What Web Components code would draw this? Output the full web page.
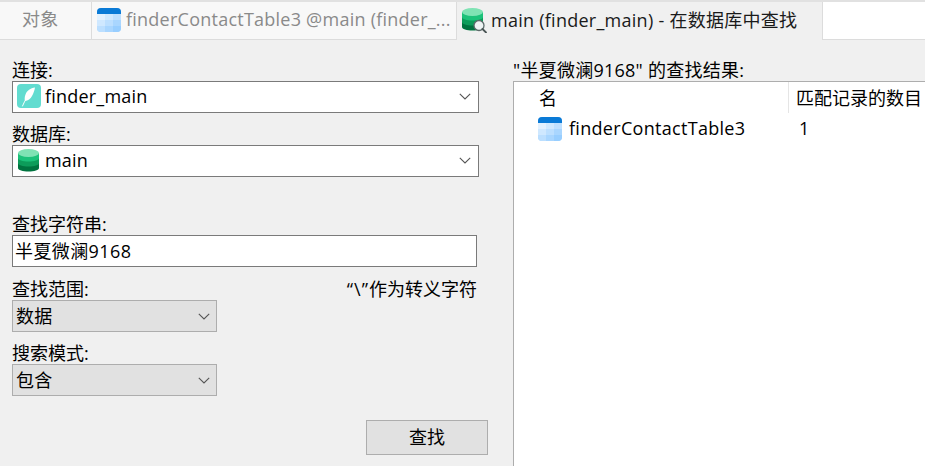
<!DOCTYPE html>
<html lang="zh-CN"><head><meta charset="utf-8"><title>在数据库中查找</title>
<style>
html,body{margin:0;padding:0}
body{width:925px;height:466px;overflow:hidden;background:#f0f0f0;color:#000;font:18px/21px "Open Sans","Noto Sans CJK SC",sans-serif}
</style></head><body>
<template id="ic-table"><svg width="24" height="24" viewBox="0 0 24 24" style="display:block;flex:none"><defs><clipPath id="c"><rect width="24" height="24" rx="4"/></clipPath></defs><g clip-path="url(#c)"><rect width="24" height="24" fill="#a6d5ff"/><rect width="24" height="6" fill="#0a7ad6"/><rect y="6" width="8" height="6" fill="#e2f1ff"/><rect x="8" y="6" width="8" height="6" fill="#d0e9ff"/><rect x="16" y="6" width="8" height="6" fill="#bfe0ff"/><rect y="12" width="8" height="6" fill="#cfe8ff"/><rect x="8" y="12" width="8" height="6" fill="#bcdfff"/><rect x="16" y="12" width="8" height="6" fill="#a9d6ff"/><rect y="18" width="8" height="6" fill="#bcdfff"/><rect x="8" y="18" width="8" height="6" fill="#a9d6ff"/><rect x="16" y="18" width="8" height="6" fill="#98ceff"/></g></svg></template>
<template id="ic-db"><svg width="24" height="24" viewBox="0 0 24 24" style="display:block;flex:none"><path d="M1 5v15c0 2 4.700 3.500 10.500 3.500S22 22 22 20V5z" fill="#00733f"/><path d="M1 5v10c0 2 4.700 3.500 10.500 3.500S22 17 22 15V5z" fill="#0d9c5a"/><path d="M1 5v5c0 2 4.700 3.500 10.500 3.500S22 12 22 10V5z" fill="#1cc27a"/><ellipse cx="11.500" cy="5" rx="10.500" ry="4" fill="#7fe3b4"/></svg></template>
<template id="ic-db-find"><svg width="26" height="26" viewBox="0 0 26 26" style="display:block;flex:none"><path d="M0 5v15c0 2 4.700 3.500 10.500 3.500S21 22 21 20V5z" fill="#00733f"/><path d="M0 5v10c0 2 4.700 3.500 10.500 3.500S21 17 21 15V5z" fill="#0d9c5a"/><path d="M0 5v5c0 2 4.700 3.500 10.500 3.500S21 12 21 10V5z" fill="#1cc27a"/><ellipse cx="10.500" cy="5" rx="10.500" ry="4" fill="#7fe3b4"/><circle cx="17" cy="18.500" r="5" fill="#eef3f3" stroke="#5c6a6a" stroke-width="1.300"/><path d="M20.500 22l3.500 3.500" stroke="#4a5555" stroke-width="1.800" stroke-linecap="round"/></svg></template>
<template id="ic-feather"><svg width="24" height="24" viewBox="0 0 24 24" style="display:block;flex:none"><rect width="24" height="24" rx="4" fill="#62dcd0"/><path d="M18 3.500c-4.500.5-8 3-9.500 7C7.500 13 7.500 15.500 8 17c3-.5 5.500-2 7-5 1.500-2.800 2.500-5.500 3-8.500z" fill="#fff"/><path d="M14.500 8C11 11.500 8 16 5.500 22" fill="none" stroke="#fff" stroke-width="1" stroke-linecap="round"/></svg></template>

<script>
function icon(n){return document.getElementById('ic-'+n).content.cloneNode(true)}
const chev='<svg width="12" height="7" viewBox="0 0 12 7" style="display:block;flex:none"><path d="M.8.8 6 6 11.200.8" fill="none" stroke="#555" stroke-width="1.100"/></svg>';
function def(name,css,html,withIcon){customElements.define(name,class extends HTMLElement{
  constructor(){super();const r=this.attachShadow({mode:'open'});r.innerHTML='<style>'+css+'</style>'+html}
  connectedCallback(){if(withIcon){const n=this.getAttribute('icon'),s=this.shadowRoot.getElementById('i');if(n&&!s.firstChild)s.append(icon(n))}}
})}

def('x-tab',`:host{display:flex;align-items:center;box-sizing:border-box;height:37px;gap:5px;padding-left:5px;padding-bottom:2px;background:#f8f8f8;color:#8a8a8a;border-right:1px solid #dcdcdc;overflow:hidden;white-space:nowrap;letter-spacing:.24px}
:host([active]){background:#f0f0f0;color:#1a1a1a;height:38px;letter-spacing:.26px}
#i{display:contents}`,'<span id="i"></span><slot></slot>',true);

def('x-tabbar',`:host{display:grid;grid-template-columns:92px 365px 366px 1fr;height:40px;box-sizing:border-box;border-top:2px solid #e1e1e1;border-bottom:1px solid #dcdcdc;background:#fff;align-items:start}`,'<slot></slot>');

def('x-field',`:host{display:block;margin-bottom:11px}
#l{display:flex;justify-content:space-between;height:21px;line-height:20px;white-space:nowrap}`,
'<div id="l"><slot name="label"></slot><slot name="note"></slot></div><slot></slot>');

def('x-combo',`:host{display:flex;align-items:center;box-sizing:border-box;height:32px;border:1px solid #7a7a7a;background:#fff;padding:0 7px 2px 4px;gap:4px;white-space:nowrap;letter-spacing:.2px}
:host([flat]){background:#e1e1e1;border-color:#adadad;padding:0 6px 0 3px}
#t{flex:1}#i{display:contents}`,'<span id="i"></span><span id="t"><slot></slot></span>'+chev,true);

def('x-input',`:host{display:flex;align-items:center;box-sizing:border-box;height:32px;border:1px solid #7a7a7a;background:#fff;padding:0 2px;white-space:nowrap;letter-spacing:.4px}`,'<slot></slot>');

def('x-button',`:host{display:flex;align-items:center;justify-content:center;box-sizing:border-box;width:122px;height:35px;border:1px solid #adadad;background:#e1e1e1;padding-bottom:1px}`,'<slot></slot>');

def('x-search-form',`:host{display:block;box-sizing:border-box;padding:20px 0 0 12px}
::slotted(x-button){margin:24px 0 0 354px}`,'<slot></slot>');

def('x-results',`:host{display:flex;flex-direction:column;padding-top:20px;min-height:0}
#l{height:21px;line-height:20px;white-space:nowrap;letter-spacing:.25px}
#b{flex:1;border:1px solid #adadad;border-width:1px 0 0 1px;background:#fff;overflow:hidden}`,
'<div id="l"><slot name="title"></slot></div><div id="b"><slot></slot></div>');

def('x-cols',`:host{display:grid;grid-template-columns:275px 1fr;white-space:nowrap}`,'<slot></slot>');
def('x-head',`:host{display:flex;align-items:center;height:31px;box-sizing:border-box;padding:2px 0 0 25px;border-right:1px solid #e5e5e5}:host(:last-of-type){border-right:0;padding-left:7px}`,'<slot></slot>');
def('x-cell',`:host{display:flex;align-items:center;height:28px;gap:7px;padding:0 0 4px 24px;margin-top:1px;letter-spacing:.3px}:host([num]){padding-left:10px}:host([num]) #i{display:none}#i{display:block;margin-top:2px}`,'<span id="i"></span><slot></slot>',true);

def('x-app',`:host{display:grid;grid-template-rows:40px 1fr;width:925px;height:466px}
#m{display:grid;grid-template-columns:513px 1fr;min-height:0}`,
'<slot name="tabs"></slot><div id="m"><slot name="form"></slot><slot name="results"></slot></div>');
</script>

<x-app>
  <x-tabbar slot="tabs">
    <x-tab style="padding-left:22px">对象</x-tab>
    <x-tab icon="table">finderContactTable3 @main (finder_...</x-tab>
    <x-tab icon="db-find" active style="gap:3px;padding-left:5px">main (finder_main) - 在数据库中查找</x-tab>
  </x-tabbar>
  <x-search-form slot="form">
    <x-field style="width:467px"><span slot="label">连接:</span><x-combo icon="feather">finder_main</x-combo></x-field>
    <x-field style="width:467px;margin-bottom:37px"><span slot="label">数据库:</span><x-combo icon="db">main</x-combo></x-field>
    <x-field style="width:465px;margin-bottom:12px"><span slot="label">查找字符串:</span><x-input>半夏微澜9168</x-input></x-field>
    <x-field style="width:465px"><span slot="label">查找范围:</span><span slot="note"><span style="letter-spacing:1px">“\”</span>作为转义字符</span><x-combo flat style="width:205px">数据</x-combo></x-field>
    <x-field style="width:205px;margin-bottom:0"><span slot="label">搜索模式:</span><x-combo flat>包含</x-combo></x-field>
    <x-button>查找</x-button>
  </x-search-form>
  <x-results slot="results">
    <span slot="title">"半夏微澜9168" 的查找结果:</span>
    <x-cols>
      <x-head>名</x-head><x-head>匹配记录的数目</x-head>
      <x-cell icon="table">finderContactTable3</x-cell><x-cell num>1</x-cell>
    </x-cols>
  </x-results>
</x-app>
</body></html>
